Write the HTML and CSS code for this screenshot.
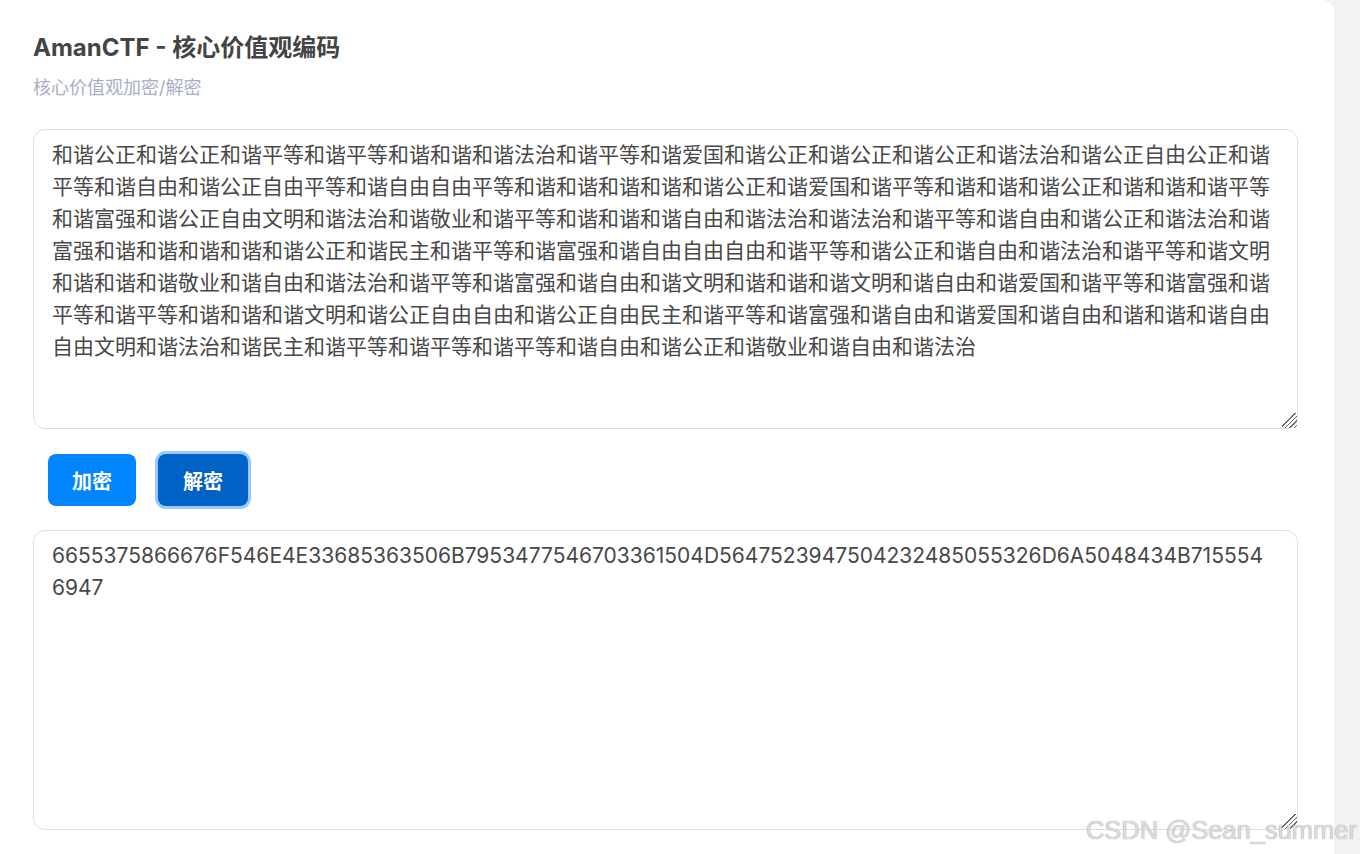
FILE: index.html
```html
<!DOCTYPE html>
<html lang="zh-CN">
<head>
    <meta charset="UTF-8">
    <meta name="viewport" content="width=device-width, initial-scale=1.0">
    <title>AmanCTF - 核心价值观编码</title>
    <link rel="stylesheet" href="styles.css">
</head>
<body>
    <div class="card">
        <h1 class="title">AmanCTF - 核心价值观编码</h1>
        <p class="subtitle">核心价值观加密/解密</p>

        <textarea id="plainText" class="code-box">和谐公正和谐公正和谐平等和谐平等和谐和谐和谐法治和谐平等和谐爱国和谐公正和谐公正和谐公正和谐法治和谐公正自由公正和谐平等和谐自由和谐公正自由平等和谐自由自由平等和谐和谐和谐和谐和谐公正和谐爱国和谐平等和谐和谐和谐公正和谐和谐和谐平等和谐富强和谐公正自由文明和谐法治和谐敬业和谐平等和谐和谐和谐自由和谐法治和谐法治和谐平等和谐自由和谐公正和谐法治和谐富强和谐和谐和谐和谐和谐公正和谐民主和谐平等和谐富强和谐自由自由自由和谐平等和谐公正和谐自由和谐法治和谐平等和谐文明和谐和谐和谐敬业和谐自由和谐法治和谐平等和谐富强和谐自由和谐文明和谐和谐和谐文明和谐自由和谐爱国和谐平等和谐富强和谐平等和谐平等和谐和谐和谐文明和谐公正自由自由和谐公正自由民主和谐平等和谐富强和谐自由和谐爱国和谐自由和谐和谐和谐自由自由文明和谐法治和谐民主和谐平等和谐平等和谐平等和谐自由和谐公正和谐敬业和谐自由和谐法治</textarea>

        <div class="actions">
            <button class="btn">加密</button>
            <button class="btn btn-active">解密</button>
        </div>

        <textarea id="resultText" class="code-box">6655375866676F546E4E33685363506B7953477546703361504D5647523947504232485055326D6A5048434B7155546947</textarea>
    </div>

    <div class="watermark">CSDN @Sean_summer</div>
</body>
</html>
```

FILE: styles.css
```css
* {
    margin: 0;
    padding: 0;
    box-sizing: border-box;
}

body {
    background: #f1f2f4;
    font-family: Inter, "Noto Sans CJK SC", sans-serif;
    height: 854px;
    overflow: hidden;
}

.card {
    width: 1334px;
    min-height: 880px;
    background: #fff;
    border-radius: 0 12px 12px 0;
    padding: 32px 36px 0 33px;
}

.title {
    font-size: 24px;
    font-weight: 700;
    color: #444;
    line-height: 32px;
}

.subtitle {
    margin-top: 12px;
    font-size: 18px;
    color: #a9adc9;
    line-height: 24px;
}

.code-box {
    display: block;
    width: 100%;
    height: 300px;
    margin-top: 29px;
    padding: 9px 24px 9px 18px;
    border: 1px solid #dedede;
    border-radius: 12px;
    font-family: Inter, "Noto Sans CJK SC", sans-serif;
    font-size: 21px;
    line-height: 32px;
    color: #484848;
    background: #fff;
    resize: vertical;
    outline: none;
}

.code-box::-webkit-scrollbar {
    width: 22px;
    height: 22px;
}

.code-box::-webkit-resizer {
    background: linear-gradient(135deg,
        transparent 0 42%, #6a6a6a 42% 48%,
        transparent 48% 57%, #6a6a6a 57% 63%,
        transparent 63% 72%, #6a6a6a 72% 78%,
        transparent 78% 87%, #6a6a6a 87% 93%,
        transparent 93%);
}

.actions {
    display: flex;
    gap: 22px;
    padding: 25px 0 0 15px;
    margin-bottom: -5px;
}

.btn {
    width: 88px;
    height: 52px;
    border: none;
    border-radius: 8px;
    background: #0084ff;
    color: #fff;
    font-family: Inter, "Noto Sans CJK SC", sans-serif;
    font-size: 20px;
    font-weight: 700;
    cursor: pointer;
}

.btn-active {
    width: 90px;
    background: #0062c4;
    box-shadow: 0 0 0 3px #98c8ff;
}

.watermark {
    position: absolute;
    right: 3px;
    bottom: 9px;
    font-family: "Liberation Sans", Arial, sans-serif;
    font-size: 25.5px;
    color: #dcdcdc;
    text-shadow: 0 0 1px #8a8a8a;
}
```
